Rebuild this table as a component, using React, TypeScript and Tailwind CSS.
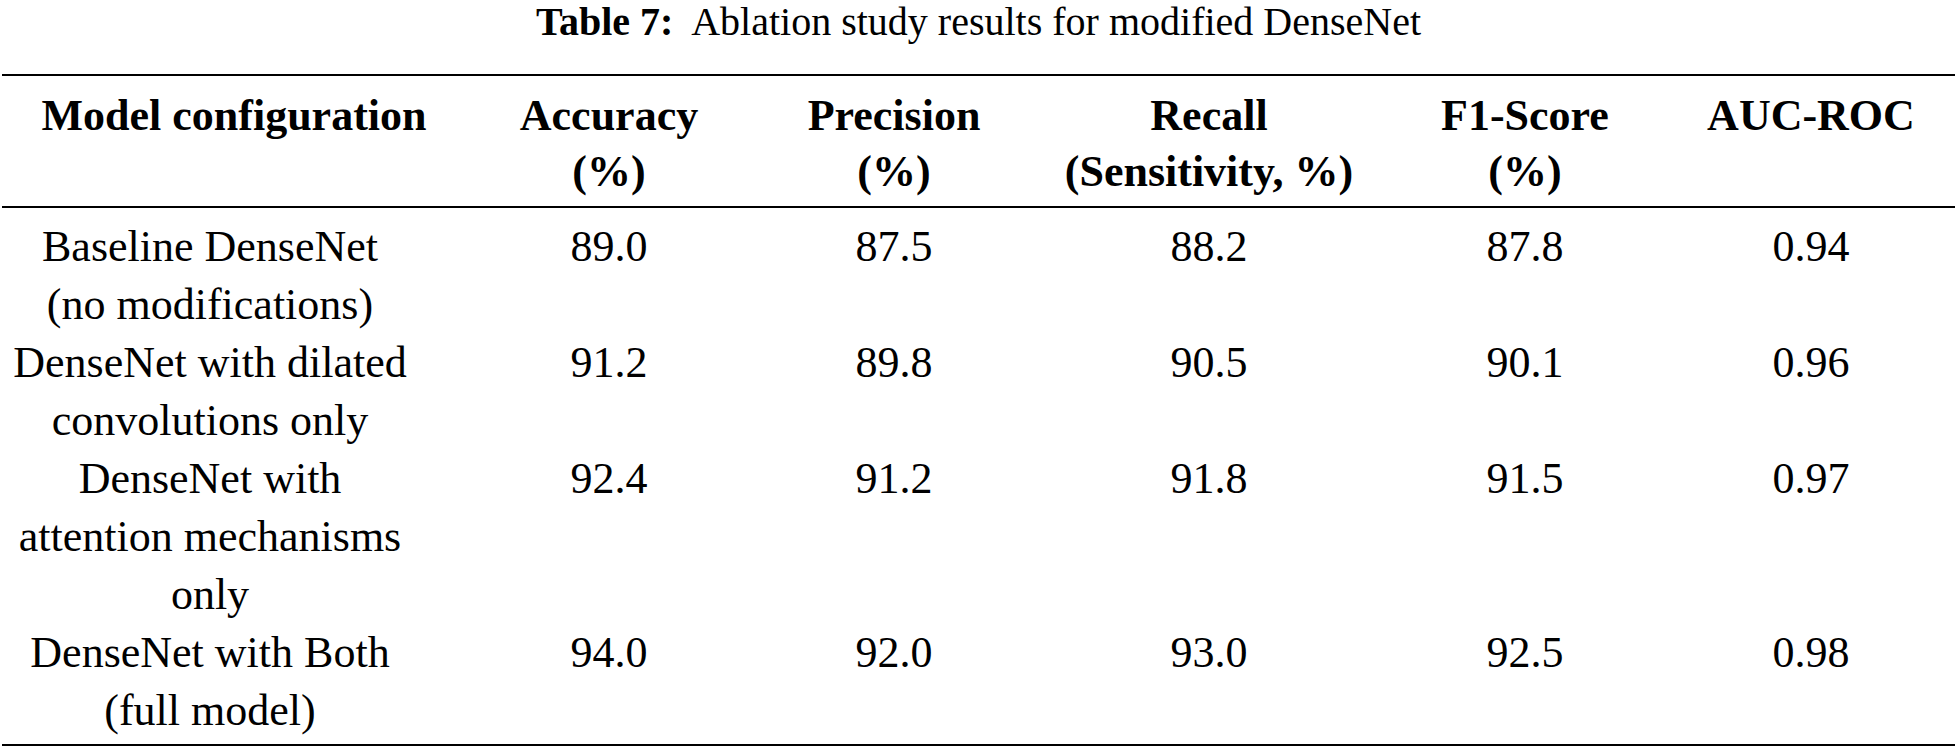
import React from "react";

const grid = "grid grid-cols-[420px_378px_192px_438px_194px_335px]";

type Row = { label: string[]; values: string[] };

const rows: Row[] = [
  { label: ["Baseline DenseNet", "(no modifications)"], values: ["89.0", "87.5", "88.2", "87.8", "0.94"] },
  { label: ["DenseNet with dilated", "convolutions only"], values: ["91.2", "89.8", "90.5", "90.1", "0.96"] },
  { label: ["DenseNet with", "attention mechanisms", "only"], values: ["92.4", "91.2", "91.8", "91.5", "0.97"] },
  { label: ["DenseNet with Both", "(full model)"], values: ["94.0", "92.0", "93.0", "92.5", "0.98"] },
];

const headers: { lines: string[]; extra?: string }[] = [
  { lines: ["Model configuration"], extra: "pl-[48px]" },
  { lines: ["Accuracy", "(%)"] },
  { lines: ["Precision", "(%)"] },
  { lines: ["Recall", "(Sensitivity, %)"] },
  { lines: ["F1-Score", "(%)"] },
  { lines: ["AUC-ROC"], extra: "pl-[43px]" },
];

function Cell({ lines, extra = "" }: { lines: string[]; extra?: string }) {
  return (
    <div className={`flex flex-col items-center whitespace-nowrap ${extra}`}>
      {lines.map((l, i) => (
        <div key={i}>{l}</div>
      ))}
    </div>
  );
}

export default function App() {
  return (
    <div className="w-[1957px] h-[748px] bg-white text-black font-['Liberation_Serif','Times_New_Roman',serif] overflow-hidden">
      <div className="h-[44px] text-[40px] leading-[44px] text-center whitespace-nowrap">
        <span className="font-bold">Table 7:</span>
        <span>&nbsp; Ablation study results for modified DenseNet</span>
      </div>
      <div className="mt-[30px] mx-[2px] h-[2px] bg-black" />
      <div className={`${grid} pt-[12px] pb-[6px] text-[44px] leading-[56px] font-bold`}>
        {headers.map((h, i) => (
          <Cell key={i} lines={h.lines} extra={h.extra} />
        ))}
      </div>
      <div className="mx-[2px] h-[2px] bg-black" />
      <div className={`${grid} pt-[10px] pb-[4px] text-[44px] leading-[58px]`}>
        {rows.map((r, ri) => (
          <React.Fragment key={ri}>
            <Cell lines={r.label} />
            {r.values.map((v, vi) => (
              <Cell key={vi} lines={[v]} extra={vi === 4 ? "pl-[43px]" : ""} />
            ))}
          </React.Fragment>
        ))}
      </div>
      <div className="mx-[2px] h-[2px] bg-black" />
    </div>
  );
}
